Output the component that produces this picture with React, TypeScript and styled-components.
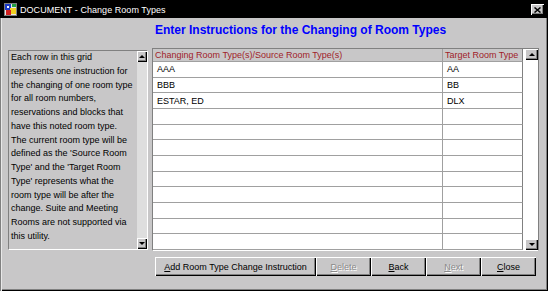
import React from "react";
import styled, { createGlobalStyle, css } from "styled-components";

const Global = createGlobalStyle`
  html, body { margin: 0; padding: 0; background: #c8c7c8; }
  body { font-family: "Liberation Sans", Arial, sans-serif; }
  #root { width: 548px; height: 291px; }
`;

const FACE = "#c8c7c8";

const Window = styled.div`
  width: 548px;
  height: 291px;
  box-sizing: border-box;
  background: ${FACE};
  display: flex;
  flex-direction: column;
  box-shadow: inset 1px 0 #808080, inset 2px 0 #e8e8e8, inset -1px -1px #000,
    inset -2px -2px #808080;
  overflow: hidden;
`;

const TitleBar = styled.div`
  height: 18px;
  flex: none;
  background: #000;
  display: flex;
  align-items: center;
  padding: 0 4px 0 4px;
  gap: 3px;
`;

const TitleText = styled.span`
  color: #fff;
  font-size: 9px;
  flex: 1;
  letter-spacing: 0.05px;
  padding-top: 1px;
`;

const CloseBtn = styled.div`
  width: 13px;
  height: 11px;
  background: ${FACE};
  box-shadow: inset 1px 1px #fff, inset -1px -1px #000, inset -2px -2px #808080;
  display: flex;
  align-items: center;
  justify-content: center;
  margin-top: 1px;
`;

const Body = styled.div`
  flex: 1;
  display: flex;
  padding: 0 9px 0 8px;
  gap: 4px;
`;

const Sidebar = styled.div`
  width: 140px;
  height: 200px;
  margin-top: 32px;
  box-sizing: border-box;
  border-top: 1px solid #808080;
  border-left: 1px solid #808080;
  border-right: 1px solid #fff;
  border-bottom: 1px solid #fff;
  display: flex;
`;

const SideText = styled.div`
  flex: 1;
  font-size: 9px;
  line-height: 13.75px;
  color: #000;
  padding: 0 0 0 2px;
  white-space: nowrap;
  overflow: hidden;
`;

const ScrollBar = styled.div<{ $track: string; $w: number }>`
  width: ${(p) => p.$w}px;
  flex: none;
  display: flex;
  flex-direction: column;
  background: ${(p) => p.$track};
`;

const ScrollTrack = styled.div`
  flex: 1;
`;

const ArrowBtn = styled.div`
  height: 11px;
  flex: none;
  background: ${FACE};
  box-shadow: inset 1px 1px #fff, inset -1px -1px #000, inset -2px -2px #808080;
  display: flex;
  align-items: center;
  justify-content: center;
`;

const Tri = styled.div<{ $down?: boolean }>`
  width: 0;
  height: 0;
  border-left: 3px solid transparent;
  border-right: 3px solid transparent;
  ${(p) =>
    p.$down
      ? css`border-top: 3px solid #000;`
      : css`border-bottom: 3px solid #000;`}
`;

const Main = styled.div`
  flex: 1;
  display: flex;
  flex-direction: column;
`;

const Heading = styled.div`
  height: 30px;
  box-sizing: border-box;
  padding: 4px 0 0 3px;
  line-height: 16px;
  font-size: 12px;
  font-weight: bold;
  color: #0000ff;
  white-space: nowrap;
`;

const Grid = styled.div`
  height: 203px;
  box-sizing: border-box;
  border-top: 1px solid #808080;
  border-left: 1px solid #808080;
  border-right: 1px solid #808080;
  border-bottom: 1px solid #fff;
  display: flex;
`;

const Table = styled.div`
  flex: 1;
  display: grid;
  grid-template-columns: 290px 80px;
  grid-template-rows: 13px repeat(12, 1fr);
  background: #fff;
`;

const HeadCell = styled.div<{ $last?: boolean }>`
  background: ${FACE};
  color: #a01c28;
  font-size: 9px;
  line-height: 12px;
  padding-left: 2px;
  border-bottom: 1px solid #a0a0a0;
  border-right: 1px solid ${(p) => (p.$last ? "#808080" : "#a0a0a0")};
  white-space: nowrap;
  overflow: hidden;
`;

const Cell = styled.div<{ $last?: boolean }>`
  font-size: 9px;
  color: #000;
  padding-left: 4px;
  display: flex;
  align-items: center;
  border-bottom: 1px solid #a0a0a0;
  border-right: 1px solid ${(p) => (p.$last ? "#808080" : "#a0a0a0")};
  white-space: nowrap;
`;

const ButtonRow = styled.div`
  display: flex;
  margin-top: 6px;
  padding-left: 3px;
`;

const Btn = styled.div<{ $w: number; $disabled?: boolean }>`
  width: ${(p) => p.$w}px;
  height: 19px;
  box-sizing: border-box;
  background: ${FACE};
  box-shadow: inset 1px 1px #fff, inset -1px -1px #000, inset -2px -2px #808080;
  font-size: 9px;
  display: flex;
  align-items: center;
  justify-content: center;
  color: ${(p) => (p.$disabled ? "#8a8a8a" : "#000")};
  text-shadow: ${(p) => (p.$disabled ? "1px 1px #fff" : "none")};
  white-space: nowrap;
`;

const Key = styled.span`
  text-decoration: underline;
`;

const sideLines = [
  "Each row in this grid",
  "represents one instruction for",
  "the changing of one room type",
  "for all room numbers,",
  "reservations and blocks that",
  "have this noted room type.",
  "The current room type will be",
  "defined as the 'Source Room",
  "Type' and the 'Target Room",
  "Type' represents what the",
  "room type will be after the",
  "change. Suite and Meeting",
  "Rooms are not supported via",
  "this utility.",
];

const rows: [string, string][] = [
  ["AAA", "AA"],
  ["BBB", "BB"],
  ["ESTAR, ED", "DLX"],
  ...Array.from({ length: 9 }, () => ["", ""] as [string, string]),
];

const AppIcon = () => (
  <svg width="13" height="13" viewBox="0 0 13 13">
    <rect x="0.5" y="0.5" width="12" height="12" fill="#e8e8e8" stroke="#808080" />
    <rect x="1" y="1" width="6" height="6" fill="#1c3cc8" />
    <rect x="6" y="5" width="6" height="6" fill="#f0d020" />
    <rect x="2" y="7" width="5" height="5" fill="#d02020" />
    <rect x="8" y="1" width="4" height="3" fill="#20a040" />
    <path d="M3 3 L5 3 L5 5 L3 5Z" fill="#fff" />
  </svg>
);

const CloseX = () => (
  <svg width="7" height="6" viewBox="0 0 7 6">
    <path d="M0.5 0.5 L6.5 5.5 M6.5 0.5 L0.5 5.5" stroke="#000" strokeWidth="1.5" />
  </svg>
);

const Scroller = ({ track, w }: { track: string; w: number }) => (
  <ScrollBar $track={track} $w={w}>
    <ArrowBtn>
      <Tri />
    </ArrowBtn>
    <ScrollTrack />
    <ArrowBtn>
      <Tri $down />
    </ArrowBtn>
  </ScrollBar>
);

export default function App() {
  return (
    <>
      <Global />
      <Window>
        <TitleBar>
          <AppIcon />
          <TitleText>DOCUMENT - Change Room Types</TitleText>
          <CloseBtn>
            <CloseX />
          </CloseBtn>
        </TitleBar>
        <Body>
          <Sidebar>
            <SideText>
              {sideLines.map((l, i) => (
                <div key={i}>{l}</div>
              ))}
            </SideText>
            <Scroller track="#dedede" w={10} />
          </Sidebar>
          <Main>
            <Heading>Enter Instructions for the Changing of Room Types</Heading>
            <Grid>
              <Table>
                <HeadCell>Changing Room Type(s)/Source Room Type(s)</HeadCell>
                <HeadCell $last>Target Room Type</HeadCell>
                {rows.map(([a, b], i) => (
                  <React.Fragment key={i}>
                    <Cell>{a}</Cell>
                    <Cell $last>{b}</Cell>
                  </React.Fragment>
                ))}
              </Table>
              <Scroller track="#fff" w={13} />
            </Grid>
            <ButtonRow>
              <Btn $w={161}>
                <Key>A</Key>dd Room Type Change Instruction
              </Btn>
              <Btn $w={55} $disabled>
                <Key>D</Key>elete
              </Btn>
              <Btn $w={55}>
                <Key>B</Key>ack
              </Btn>
              <Btn $w={55} $disabled>
                <Key>N</Key>ext
              </Btn>
              <Btn $w={55}>
                <Key>C</Key>lose
              </Btn>
            </ButtonRow>
          </Main>
        </Body>
      </Window>
    </>
  );
}
